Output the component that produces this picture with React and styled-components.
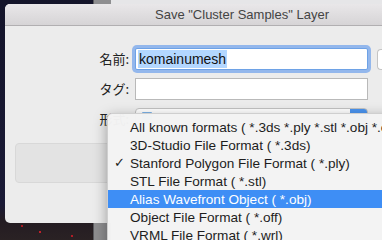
import React from 'react';
import styled, { createGlobalStyle } from 'styled-components';

const GlobalStyle = createGlobalStyle`
  html, body {
    margin: 0;
    padding: 0;
    overflow: hidden;
  }
  body {
    font-family: "Liberation Sans", "Noto Sans CJK JP", sans-serif;
  }
`;

const Desktop = styled.div`
  position: relative;
  width: 382px;
  height: 240px;
  overflow: hidden;
  background:
    radial-gradient(circle at 40px 232px, #c0202a 0 1px, transparent 1.5px),
    radial-gradient(circle at 72px 236px, #b01c26 0 1px, transparent 1.5px),
    radial-gradient(circle at 22px 226px, #a81a22 0 1px, transparent 1.5px),
    linear-gradient(180deg, #14142a 0%, #1a1a36 85%, #241c22 92%, #2a2224 100%);
`;

const BackWindow = styled.div`
  position: absolute;
  left: 93px;
  top: -10px;
  width: 320px;
  height: 260px;
  background: linear-gradient(90deg, #8e8e90 0 17px, #e6e6e8 17px);
  border-left: 1px solid #5a5a5e;
`;

const Window = styled.div`
  position: absolute;
  left: 5px;
  top: 4px;
  width: 474px;
  height: 219px;
  background: #ececec;
  border-radius: 5px;
  overflow: hidden;
  display: flex;
  flex-direction: column;
`;

const TitleBar = styled.div`
  height: 21px;
  flex: none;
  display: flex;
  align-items: center;
  justify-content: center;
  background: linear-gradient(180deg, #e9e7e9 0%, #d6d4d6 100%);
  border-bottom: 1px solid #b1afb1;
  color: #444;
  font-size: 13px;
`;

const Body = styled.div`
  padding: 22px 0 0 10px;
  display: flex;
  flex-direction: column;
  gap: 13px;
`;

const Form = styled.div`
  display: grid;
  grid-template-columns: 114px 233px 20px;
  column-gap: 6px;
  row-gap: 8px;
  align-items: center;
`;

const Label = styled.div`
  text-align: right;
  font-family: "Noto Sans CJK JP", "Liberation Sans", sans-serif;
  font-size: 13px;
  color: #222;
  line-height: 22px;
`;

const Field = styled.div`
  height: 22px;
  box-sizing: border-box;
  background: #fff;
  border: 1px solid ${p => (p.$focused ? '#6ea2e6' : '#b9b9b9')};
  box-shadow: ${p => (p.$focused ? '0 0 0 3px rgba(118,166,236,0.75)' : 'none')};
  border-radius: ${p => (p.$focused ? '2px' : '0')};
  display: flex;
  align-items: center;
  padding-left: 2px;
  font-size: 14px;
  color: #111;
`;

const Selected = styled.span`
  background: #b3d7ff;
  line-height: 18px;
  padding: 0 1px;
`;

const SideButton = styled.div`
  height: 21px;
  margin-left: 3px;
  box-sizing: border-box;
  border: 1px solid #c4c4c4;
  border-right: none;
  border-radius: 4px 0 0 4px;
  background: #fff;
`;

const Popup = styled.div`
  height: 22px;
  box-sizing: border-box;
  background: linear-gradient(90deg, #fff 0, #fff calc(100% - 17px), #4a94f0 calc(100% - 17px));
  border: 1px solid #c2c2c2;
  border-radius: 4px;
`;

const FolderIcon = styled.div`
  width: 10px;
  height: 8px;
  margin: 3px 0 0 6px;
  background: #7db4ea;
  border-radius: 1px;
`;

const Panel = styled.div`
  width: 380px;
  height: 40px;
  box-sizing: border-box;
  background: #e3e3e3;
  border: 1px solid #d8d8d8;
  border-radius: 4px;
`;

const Menu = styled.div`
  position: absolute;
  left: 107px;
  top: 113px;
  width: 300px;
  height: 140px;
  padding-top: 4px;
  background: rgba(243, 243, 243, 0.98);
  border: 1px solid #cfcfcf;
  border-radius: 5px;
  box-shadow: 0 4px 14px rgba(0, 0, 0, 0.35);
  display: flex;
  flex-direction: column;
`;

const Item = styled.div`
  height: 18px;
  display: flex;
  align-items: center;
  padding-left: 22px;
  position: relative;
  font-size: 13.6px;
  white-space: nowrap;
  color: ${p => (p.$active ? '#fff' : '#1d1d1d')};
  background: ${p => (p.$active ? '#3e8ef5' : 'transparent')};
`;

const Check = styled.span`
  position: absolute;
  left: 6px;
  top: 0;
  line-height: 18px;
  font-size: 13px;
  font-family: "DejaVu Sans", sans-serif;
`;

const formats = [
  'All known formats ( *.3ds *.ply *.stl *.obj *.off *.wrl)',
  '3D-Studio File Format ( *.3ds)',
  'Stanford Polygon File Format ( *.ply)',
  'STL File Format ( *.stl)',
  'Alias Wavefront Object ( *.obj)',
  'Object File Format ( *.off)',
  'VRML File Format ( *.wrl)',
];

export default function App() {
  return (
    <Desktop>
      <GlobalStyle />
      <BackWindow />
      <Window>
        <TitleBar>Save "Cluster Samples" Layer</TitleBar>
        <Body>
          <Form>
            <Label>名前:</Label>
            <Field $focused>
              <Selected>komainumesh</Selected>
            </Field>
            <SideButton />
            <Label>タグ:</Label>
            <Field />
            <div />
            <Label>形式:</Label>
            <Popup>
              <FolderIcon />
            </Popup>
            <div />
          </Form>
          <Panel />
        </Body>
      </Window>
      <Menu>
        {formats.map((f, i) => (
          <Item key={f} $active={i === 4}>
            {i === 2 && <Check>✓</Check>}
            {f}
          </Item>
        ))}
      </Menu>
    </Desktop>
  );
}
